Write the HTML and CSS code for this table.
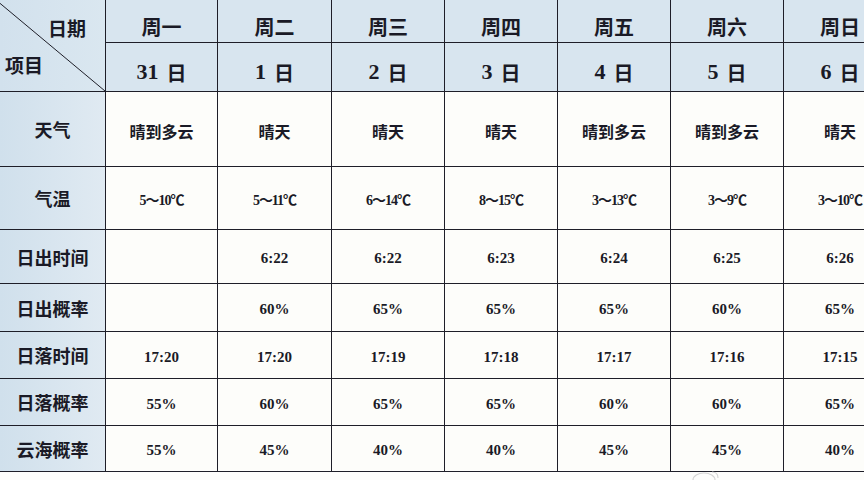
FILE: index.html
```html
<!DOCTYPE html>
<html lang="zh">
<head>
<meta charset="utf-8">
<title>天气表</title>
<link rel="stylesheet" href="styles.css">
</head>
<body>
<div class="page">
  <div class="sheet">
    <div class="corner">
      <svg class="diag" viewBox="0 0 105 91" preserveAspectRatio="none"><line x1="-4" y1="0" x2="105" y2="91" stroke="#1e1e28" stroke-width="1"/></svg>
      <span class="c-date">日期</span>
      <span class="c-item">项目</span>
    </div>
    <div class="hd wk">周一</div><div class="hd wk">周二</div><div class="hd wk">周三</div><div class="hd wk">周四</div><div class="hd wk">周五</div><div class="hd wk">周六</div><div class="hd wk">周日</div>
    <div class="hd dt"><b>31</b>日</div><div class="hd dt"><b>1</b>日</div><div class="hd dt"><b>2</b>日</div><div class="hd dt"><b>3</b>日</div><div class="hd dt"><b>4</b>日</div><div class="hd dt"><b>5</b>日</div><div class="hd dt"><b>6</b>日</div>

    <div class="lb">天气</div>
    <div class="cn">晴到多云</div><div class="cn">晴天</div><div class="cn">晴天</div><div class="cn">晴天</div><div class="cn">晴到多云</div><div class="cn">晴到多云</div><div class="cn">晴天</div>

    <div class="lb">气温</div>
    <div class="nm tmp">5～10℃</div><div class="nm tmp">5～11℃</div><div class="nm tmp">6～14℃</div><div class="nm tmp">8～15℃</div><div class="nm tmp">3～13℃</div><div class="nm tmp">3～9℃</div><div class="nm tmp">3～10℃</div>

    <div class="lb">日出时间</div>
    <div class="nm"></div><div class="nm">6:22</div><div class="nm">6:22</div><div class="nm">6:23</div><div class="nm">6:24</div><div class="nm">6:25</div><div class="nm">6:26</div>

    <div class="lb">日出概率</div>
    <div class="nm"></div><div class="nm">60%</div><div class="nm">65%</div><div class="nm">65%</div><div class="nm">65%</div><div class="nm">60%</div><div class="nm">65%</div>

    <div class="lb">日落时间</div>
    <div class="nm">17:20</div><div class="nm">17:20</div><div class="nm">17:19</div><div class="nm">17:18</div><div class="nm">17:17</div><div class="nm">17:16</div><div class="nm">17:15</div>

    <div class="lb">日落概率</div>
    <div class="nm">55%</div><div class="nm">60%</div><div class="nm">65%</div><div class="nm">65%</div><div class="nm">60%</div><div class="nm">60%</div><div class="nm">65%</div>

    <div class="lb">云海概率</div>
    <div class="nm">55%</div><div class="nm">45%</div><div class="nm">40%</div><div class="nm">40%</div><div class="nm">45%</div><div class="nm">45%</div><div class="nm">40%</div>
  </div>
  <svg class="mark" viewBox="0 0 40 14" width="40" height="14"><ellipse cx="14" cy="10" rx="11" ry="7" fill="none" stroke="#d4d4d4" stroke-width="1.2"/><path d="M22 2 q6 0 6 6" fill="none" stroke="#d4d4d4" stroke-width="1.2"/></svg>
</div>
</body>
</html>
```

FILE: styles.css
```css
html, body {
  margin: 0;
  padding: 0;
  background: #ffffff;
}
.page {
  position: relative;
  width: 864px;
  height: 480px;
  overflow: hidden;
  background: #fdfdfb;
}
.sheet {
  display: grid;
  grid-template-columns: 105px 111px 113px 112px 112px 112px 112px 112px;
  grid-template-rows: 42px 48px 74px 62px 53px 47px 46px 46px 45px;
  gap: 1px;
  padding-bottom: 1px;
  width: max-content;
  background: #1e1e28;
  color: #1a1a26;
  font-family: "Noto Sans CJK SC", "DejaVu Sans", sans-serif;
}
.sheet > div {
  display: flex;
  align-items: center;
  justify-content: center;
}
.corner {
  grid-row: span 2;
  position: relative;
  background: linear-gradient(90deg, #d2e1ed, #dae7f0);
}
.diag {
  position: absolute;
  left: 0;
  top: 0;
  width: 105px;
  height: 91px;
}
.c-date {
  position: absolute;
  left: 48px;
  top: 15px;
  font-size: 19px;
  font-weight: 700;
  line-height: 26px;
}
.c-item {
  position: absolute;
  left: 5px;
  top: 52px;
  font-size: 19px;
  font-weight: 700;
  line-height: 26px;
}
.hd {
  background: #d8e5ef;
  padding-top: 10px;
  box-sizing: border-box;
}
.wk {
  font-size: 20px;
  font-weight: 700;
}
.dt {
  font-size: 20px;
  font-weight: 700;
  gap: 8px;
}
.dt b {
  font-family: "Liberation Serif", "DejaVu Serif", serif;
  font-size: 22px;
}
.lb {
  background: linear-gradient(90deg, #d0e0ec, #e0eaf2);
  font-size: 18px;
  font-weight: 700;
}
.cn {
  background: #fdfdfa;
  font-size: 16px;
  font-weight: 700;
  padding-top: 4px;
  box-sizing: border-box;
}
.nm {
  background: #fdfdfa;
  font-family: "Liberation Serif", "Noto Sans CJK SC", serif;
  font-size: 15px;
  font-weight: 700;
  padding-top: 4px;
  box-sizing: border-box;
}
.tmp {
  font-family: "Liberation Serif", "Noto Sans CJK SC", serif;
  font-size: 14px;
  letter-spacing: -1px;
  padding-top: 2px;
}
.mark {
  position: absolute;
  left: 690px;
  top: 470px;
}
```
